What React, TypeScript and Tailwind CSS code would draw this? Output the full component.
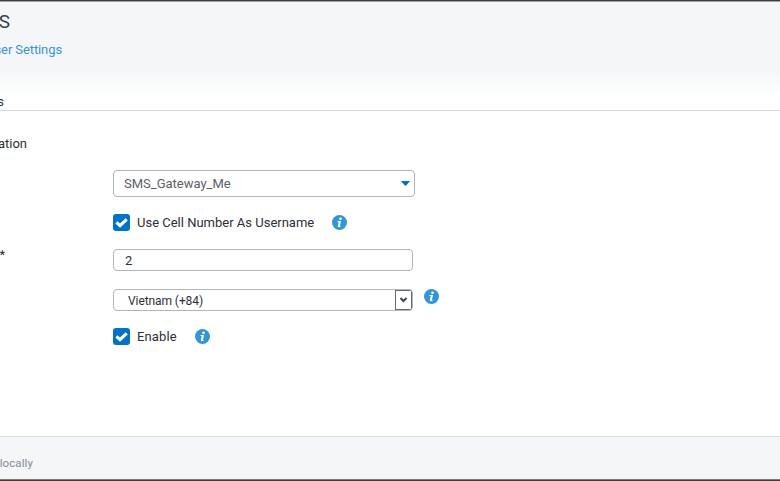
import React from 'react';

function InfoIcon() {
  return (
    <svg className="block h-[15px] w-[15px] shrink-0" viewBox="0 0 15 15">
      <circle cx="7.5" cy="7.5" r="7.5" fill="#3296d6" />
      <circle cx="8.5" cy="3.7" r="1.3" fill="#fff" />
      <path d="M5.6 6.1h3.4l-1 4.5c-.1.5.4.4 1 .1l-.2.9c-1.6.9-3.2.8-2.9-.9l.8-3.6H5.4z" fill="#fff" />
    </svg>
  );
}

function CheckedBox() {
  return (
    <span className="flex h-[17px] w-[17px] shrink-0 items-center justify-center rounded-[3px] bg-[#0073c8]">
      <svg className="block h-[17px] w-[17px]" viewBox="0 0 17 17">
        <path d="M3.4 8.3l3.6 3.4 6.7-6.3" fill="none" stroke="#fff" strokeWidth="3.1" />
      </svg>
    </span>
  );
}

function Clipped({ className, children }: { className: string; children: React.ReactNode }) {
  return <div className={`flex justify-end overflow-hidden whitespace-nowrap ${className}`}>{children}</div>;
}

export default function App() {
  return (
    <div className="flex h-[481px] w-[780px] flex-col overflow-hidden bg-white font-['Roboto','Liberation_Sans',sans-serif] text-[13px] text-[#2b3037]">
      <header className="h-[72px] shrink-0 border-t border-[#3c3b3e] bg-[#f4f6f8]">
        <div className="h-px bg-[#a5a3a6]" />
        <Clipped className="mt-[8px] h-6 w-[10px] text-[19px] leading-6 text-[#344250]">S</Clipped>
        <Clipped className="mt-[6px] h-5 w-[62px] leading-5 tracking-[-0.1px] text-[#3995d1]">ser Settings</Clipped>
      </header>
      <div className="flex h-[39px] shrink-0 flex-col border-b border-[#d7d9dc] bg-linear-to-b from-[#f5f7f8] to-white to-70%">
        <Clipped className="mt-[21px] h-[17px] w-[4px] leading-[17px]">s</Clipped>
      </div>

      <main className="flex h-[325px] shrink-0 flex-col">
        <Clipped className="mt-6 h-[18px] w-[27px] leading-[18px]">ation</Clipped>

        <div className="ml-[113px] mt-[17px] flex h-[27px] w-[302px] items-center justify-between rounded border border-[#adb5bd] pl-[10px] pr-1 text-[#5c6067]">
          <span>SMS_Gateway_Me</span>
          <svg className="h-[5px] w-[9px]" viewBox="0 0 9 5">
            <path d="M0 0h9L5.2 4.5H3.8z" fill="#0073c8" />
          </svg>
        </div>

        <div className="ml-[113px] mt-[17px] flex h-[17px] items-center">
          <CheckedBox />
          <span className="ml-[7px] w-[195px] whitespace-nowrap">Use Cell Number As Username</span>
          <InfoIcon />
        </div>

        <div className="mt-[18px] flex h-[22px]">
          <Clipped className="-mt-[3px] h-[18px] w-[5px] leading-[18px]">*</Clipped>
          <div className="ml-[108px] flex w-[300px] items-center rounded border border-[#adb5bd] pl-[11px] pt-[2px]">2</div>
        </div>

        <div className="ml-[113px] mt-[18px] flex h-[22px]">
          <div className="flex w-[300px] items-center justify-between overflow-hidden rounded border border-[#adb5bd] pl-[14px] text-xs">
            <span className="pt-[2px] tracking-[-0.08px]">Vietnam (+84)</span>
            <span className="flex h-5 w-[17px] items-center justify-center border border-[#66686b]">
              <svg className="h-[6px] w-[7px]" viewBox="0 0 7 6">
                <path d="M.5 1l3 3 3-3" fill="none" stroke="#444649" strokeWidth="2" />
              </svg>
            </span>
          </div>
          <div className="ml-[11px]">
            <InfoIcon />
          </div>
        </div>

        <div className="ml-[113px] mt-[17px] flex h-[17px] items-center">
          <CheckedBox />
          <span className="ml-[7px] w-[58px] tracking-[0.12px]">Enable</span>
          <InfoIcon />
        </div>
      </main>

      <footer className="flex h-[45px] shrink-0 flex-col border-b border-t border-b-[#3c3b3e] border-t-[#d9dce0] bg-[#f4f6f8]">
        <Clipped className="mt-[17px] h-[18px] w-[33px] text-[11.5px] leading-[18px] text-[#7f8b98]">
          <span className="tracking-[0.1px]">locally</span>
        </Clipped>
        <div className="mt-auto h-px bg-[#7a797c]" />
      </footer>
    </div>
  );
}
